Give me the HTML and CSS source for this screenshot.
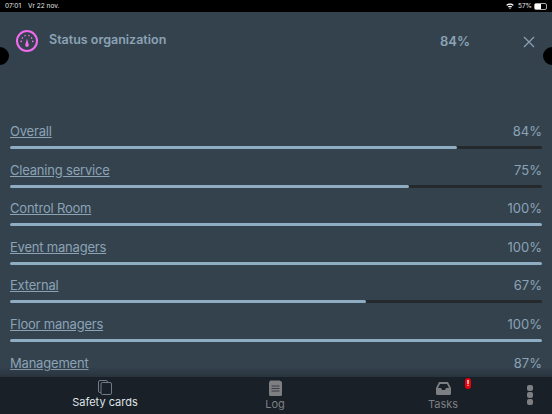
FILE: index.html
```html
<!DOCTYPE html>
<html lang="en">
<head>
    <meta charset="UTF-8">
    <meta name="viewport" content="width=device-width, initial-scale=1.0">
    <title>Status organization</title>
    <link rel="stylesheet" href="styles.css">
</head>
<body>
    <div class="status-bar">
        <div class="status-left"><span>07:01</span><span>Vr 22 nov.</span></div>
        <div class="status-right">
            <svg class="wifi" width="8" height="6" viewBox="0 0 10 8"><path d="M0 2.600C2.800 0 7.200 0 10 2.600L8.800 3.800C6.600 1.800 3.400 1.800 1.200 3.800ZM2.200 4.800C3.800 3.400 6.200 3.400 7.800 4.800L6.700 5.900C5.700 5 4.300 5 3.300 5.900ZM5 8L3.900 6.900C4.500 6.300 5.500 6.300 6.100 6.900Z" fill="#fff"/></svg>
            <span class="battery-text">57%</span>
            <span class="battery"><span class="battery-level"></span></span>
        </div>
    </div>

    <div class="panel">
        <span class="notch notch-left"></span>
        <span class="notch notch-right"></span>

        <div class="header">
            <svg class="gauge" width="24" height="24" viewBox="0 0 24 24" fill="none" stroke="#f06cec">
                <circle cx="12" cy="12" r="10" stroke-width="2"/>
                <path d="M5.500 12.500L7 12.200M6.800 8.600L8 9.400M9.800 6L10.300 7.300M14.200 6L13.700 7.300M17.200 8.600L16 9.400M18.500 12.500L17 12.200" stroke-width="1.400"/>
                <path d="M12 9.500L13.700 15.500A1.800 1.800 0 1 1 10.300 15.500Z" fill="#f06cec" stroke="none"/>
            </svg>
            <div class="title">Status organization</div>
            <div class="total">84%</div>
            <svg class="close" width="12" height="12" viewBox="0 0 12 12"><path d="M1 1L11 11M11 1L1 11" stroke="#8ba3b5" stroke-width="1.200" fill="none"/></svg>
        </div>

        <div class="rows">
            <div class="row">
                <div class="row-text"><a href="#">Overall</a><span>84%</span></div>
                <div class="track"><div class="fill" style="width: 84%"></div></div>
            </div>
            <div class="row">
                <div class="row-text"><a href="#">Cleaning service</a><span>75%</span></div>
                <div class="track"><div class="fill" style="width: 75%"></div></div>
            </div>
            <div class="row">
                <div class="row-text"><a href="#">Control Room</a><span>100%</span></div>
                <div class="track"><div class="fill" style="width: 100%"></div></div>
            </div>
            <div class="row">
                <div class="row-text"><a href="#">Event managers</a><span>100%</span></div>
                <div class="track"><div class="fill" style="width: 100%"></div></div>
            </div>
            <div class="row">
                <div class="row-text"><a href="#">External</a><span>67%</span></div>
                <div class="track"><div class="fill" style="width: 67%"></div></div>
            </div>
            <div class="row">
                <div class="row-text"><a href="#">Floor managers</a><span>100%</span></div>
                <div class="track"><div class="fill" style="width: 100%"></div></div>
            </div>
            <div class="row">
                <div class="row-text"><a href="#">Management</a><span>87%</span></div>
            </div>
        </div>
    </div>

    <div class="tabs">
        <div class="tab tab-cards active">
            <svg width="14" height="15" viewBox="0 0 14 15" fill="none" stroke="#6f7b86" stroke-width="1">
                <path d="M3 12.500H2A1.500 1.500 0 0 1 .5 11V2A1.500 1.500 0 0 1 2 .5H8A1.500 1.500 0 0 1 9.500 2V2.500"/>
                <rect x="3" y="2.500" width="10.500" height="12" rx="1.500"/>
            </svg>
            <span>Safety cards</span>
        </div>
        <div class="tab tab-log">
            <svg width="13" height="16" viewBox="0 0 13 16">
                <rect x="0" y="1" width="13" height="15" rx="1.500" fill="#7d7f83"/>
                <path d="M1.500 .5H11.500" stroke="#7d7f83" stroke-dasharray="1 1"/>
                <path d="M2.500 6H10.500M2.500 8.500H10.500M2.500 11H10.500" stroke="#3a3d42" stroke-width="1.200"/>
            </svg>
            <span>Log</span>
        </div>
        <div class="tab tab-tasks">
            <svg width="15" height="13" viewBox="0 0 15 13">
                <path d="M3 0H12L15 6V11.500A1.500 1.500 0 0 1 13.500 13H1.500A1.500 1.500 0 0 1 0 11.500V6ZM2 6H5L6 8H9L10 6H13L11 2H4Z" fill="#7d7f83" fill-rule="evenodd"/>
            </svg>
            <span>Tasks</span>
            <b class="badge">!</b>
        </div>
        <div class="more"><i></i><i></i><i></i></div>
    </div>
</body>
</html>
```

FILE: styles.css
```css
html, body {
    margin: 0;
    padding: 0;
}
body {
    width: 552px;
    height: 414px;
    overflow: hidden;
    display: flex;
    flex-direction: column;
    background: #34424e;
    font-family: Inter, "Liberation Sans", sans-serif;
    color: #8ba3b5;
}

/* status bar */
.status-bar {
    height: 12px;
    flex: none;
    background: #000;
    color: #e4e4e4;
    font-size: 6.500px;
    display: flex;
    justify-content: space-between;
    align-items: center;
    padding: 0 5px;
}
.status-left {
    display: flex;
    gap: 7px;
}
.status-right {
    display: flex;
    align-items: center;
}
.battery-text {
    margin: 0 2px 0 4px;
}
.battery {
    width: 11px;
    height: 5px;
    border: 1px solid #aaa;
    border-radius: 2px;
    display: block;
}
.battery-level {
    display: block;
    width: 57%;
    height: 100%;
    background: #fff;
}

/* panel */
.panel {
    position: relative;
    flex: 1;
    min-height: 0;
    overflow: hidden;
}
.notch {
    position: absolute;
    top: 35px;
    width: 18px;
    height: 18px;
    border-radius: 50%;
    background: #000;
}
.notch-left {
    left: -9px;
}
.notch-right {
    right: -9px;
}
.header {
    display: flex;
    align-items: center;
    height: 58px;
    padding: 0 17px 0 15px;
}
.gauge {
    flex: none;
    margin-top: -1px;
}
.title {
    margin-left: 10px;
    margin-top: -4px;
    width: 391px;
    font-size: 12.500px;
    font-weight: 600;
}
.total {
    flex: 1;
    font-size: 13px;
    font-weight: 600;
    margin-top: -1px;
}
.close {
    flex: none;
    margin-top: 2px;
}
.rows {
    padding: 51px 10px 0;
    display: flex;
    flex-direction: column;
    gap: 10.600px;
}
.row-text {
    display: flex;
    justify-content: space-between;
    font-size: 13px;
    line-height: 20px;
}
.row-text a {
    color: #8ba3b5;
    letter-spacing: -.2px;
}
.track {
    height: 3px;
    margin-top: 5px;
    border-radius: 2px;
    background: #25292c;
}
.fill {
    height: 100%;
    border-radius: 2px;
    background: #8fadc2;
}

/* bottom tabs */
.tabs {
    position: relative;
    flex: none;
    height: 37px;
    background: #192027;
    display: flex;
    color: #7d7f83;
    font-size: 11px;
}
.tabs::before {
    content: "";
    position: absolute;
    left: 0;
    right: 0;
    top: -10px;
    height: 10px;
    background: linear-gradient(rgba(25, 32, 39, 0), rgba(25, 32, 39, .45));
}
.tab {
    position: relative;
    display: flex;
    flex-direction: column;
    align-items: center;
    gap: 1px;
    padding-top: 3px;
}
.tab-cards {
    width: 210px;
    gap: 0;
    color: #dfe3e6;
}
.tab-log {
    width: 130px;
}
.tab-tasks {
    width: 206px;
    padding-top: 5px;
    gap: 2px;
}
.badge {
    position: absolute;
    top: 1px;
    left: 125px;
    width: 6px;
    height: 11px;
    border-radius: 3px;
    background: #e8000b;
    color: #fff;
    font-size: 8px;
    line-height: 11px;
    text-align: center;
}
.more {
    position: absolute;
    right: 19px;
    top: 8px;
    display: flex;
    flex-direction: column;
    gap: 1.500px;
}
.more i {
    display: block;
    width: 6px;
    height: 5.500px;
    border-radius: 2px;
    background: #7d7f83;
}
```
